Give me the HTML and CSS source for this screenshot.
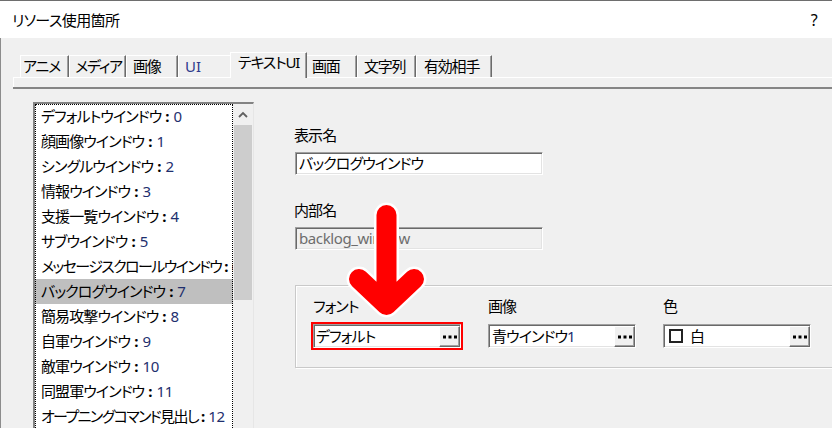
FILE: index.html
```html
<!DOCTYPE html>
<html lang="ja">
<head>
<meta charset="utf-8">
<title>リソース使用箇所</title>
<link rel="stylesheet" href="styles.css">
</head>
<body>
<div class="titlebar">
  <span class="title">リソース使用箇所</span>
  <span class="help">?</span>
</div>
<div class="dialog">
  <div class="tabs">
    <div class="tab t1">アニメ</div>
    <div class="tab t2">メディア</div>
    <div class="tab t3">画像</div>
    <div class="tab t4"><span class="latin">UI</span></div>
    <div class="tab active">テキストUI</div>
    <div class="tab t6">画面</div>
    <div class="tab t7">文字列</div>
    <div class="tab t8">有効相手</div>
  </div>
  <div class="band"></div>
  <div class="content">
    <div class="listbox">
      <div class="items">
        <div class="item">デフォルトウインドウ<span class="sep">:</span><span class="n">0</span></div>
        <div class="item">顔画像ウインドウ<span class="sep">:</span><span class="n">1</span></div>
        <div class="item">シングルウインドウ<span class="sep">:</span><span class="n">2</span></div>
        <div class="item">情報ウインドウ<span class="sep">:</span><span class="n">3</span></div>
        <div class="item">支援一覧ウインドウ<span class="sep">:</span><span class="n">4</span></div>
        <div class="item">サブウインドウ<span class="sep">:</span><span class="n">5</span></div>
        <div class="item compact">メッセージスクロールウインドウ<span class="sep">:</span><span class="n">6</span></div>
        <div class="item sel">バックログウインドウ<span class="sep">:</span><span class="n">7</span></div>
        <div class="item">簡易攻撃ウインドウ<span class="sep">:</span><span class="n">8</span></div>
        <div class="item">自軍ウインドウ<span class="sep">:</span><span class="n">9</span></div>
        <div class="item">敵軍ウインドウ<span class="sep">:</span><span class="n">10</span></div>
        <div class="item">同盟軍ウインドウ<span class="sep">:</span><span class="n">11</span></div>
        <div class="item compact">オープニングコマンド見出し<span class="sep">:</span><span class="n">12</span></div>
      </div>
      <div class="sb">
        <div class="sb-up">
          <svg width="10" height="7" viewBox="0 0 10 7"><path d="M1 6 L5 2 L9 6" fill="none" stroke="#606060" stroke-width="1.8"/></svg>
        </div>
        <div class="thumb"></div>
      </div>
    </div>
    <div class="pane">
      <div class="label">表示名</div>
      <div class="field wide"><span class="val">バックログウインドウ</span></div>
      <div class="label second">内部名</div>
      <div class="field wide disabled"><span class="val">backlog_window</span></div>
      <div class="group">
        <div class="col">
          <div class="label">フォント</div>
          <div class="field pick hl">
            <span class="val tight">デフォルト</span>
            <span class="btn"><svg width="14" height="4" viewBox="0 0 14 4"><rect x="0" y="0.5" width="3" height="3"/><rect x="5.5" y="0.5" width="3" height="3"/><rect x="11" y="0.5" width="3" height="3"/></svg></span>
          </div>
        </div>
        <div class="col">
          <div class="label">画像</div>
          <div class="field pick">
            <span class="val">青ウインドウ<span class="n">1</span></span>
            <span class="btn"><svg width="14" height="4" viewBox="0 0 14 4"><rect x="0" y="0.5" width="3" height="3"/><rect x="5.5" y="0.5" width="3" height="3"/><rect x="11" y="0.5" width="3" height="3"/></svg></span>
          </div>
        </div>
        <div class="col">
          <div class="label">色</div>
          <div class="field pick">
            <span class="swatch"></span>
            <span class="val colorname">白</span>
            <span class="btn"><svg width="14" height="4" viewBox="0 0 14 4"><rect x="0" y="0.5" width="3" height="3"/><rect x="5.5" y="0.5" width="3" height="3"/><rect x="11" y="0.5" width="3" height="3"/></svg></span>
          </div>
        </div>
      </div>
    </div>
  </div>
</div>
<svg class="arrow" width="832" height="428" viewBox="0 0 832 428">
  <path d="M386.5 215 V304 M359 279 L386.5 305 L414 279" fill="none" stroke="#ffffff" stroke-width="25" stroke-linecap="round" stroke-linejoin="round"/>
  <path d="M386.5 215 V304 M359 279 L386.5 305 L414 279" fill="none" stroke="#ff0000" stroke-width="20" stroke-linecap="round" stroke-linejoin="round"/>
</svg>
</body>
</html>
```
FILE: styles.css
```css
* { box-sizing: border-box; }

body {
  margin: 0;
  width: 832px;
  height: 428px;
  overflow: hidden;
  position: relative;
  background: #f0f0f0;
  color: #000;
  font-family: "Noto Sans", "Noto Sans CJK JP", sans-serif;
  font-size: 15px;
  letter-spacing: -0.9px;
  font-feature-settings: "palt";
}

.titlebar {
  height: 38px;
  border-top: 1px solid #6e6e6e;
  background: #ffffff;
  display: flex;
  align-items: center;
  justify-content: space-between;
  padding: 0 15px 0 12px;
  line-height: 20px;
  letter-spacing: -0.6px;
}
.help { font-size: 16px; }

.dialog {
  border-left: 1px solid #8c8c8c;
  height: 390px;
}

.tabs {
  display: flex;
  align-items: flex-end;
  height: 39px;
  padding: 14px 0 0 19px;
}
.tab {
  flex: none;
  height: 22px;
  line-height: 20px;
  white-space: nowrap;
  letter-spacing: -1.2px;
  background: #f0f0f0;
  border-top: 1px solid #ffffff;
  border-left: 1px solid #ffffff;
  border-right: 1px solid #6b6b6b;
  box-shadow: inset -1px 0 0 #a0a0a0;
}
.t1 { width: 49px; padding-left: 2px; }
.t2 { width: 57px; padding-left: 5px; }
.t3 { width: 52px; padding-left: 6px; }
.t4 { width: 54px; padding-left: 6px; }
.t6 { width: 52px; padding-left: 6px; }
.t7 { width: 59px; padding-left: 6px; }
.t8 { width: 76px; padding-left: 7px; }
.tab.active {
  width: 77px;
  height: 26px;
  line-height: 18px;
  padding-left: 7px;
  margin: 0 -2px -1px -2px;
  position: relative;
  z-index: 1;
}
.latin { color: #2e3a8c; letter-spacing: 0; }

.band {
  height: 10px;
  margin-left: 12px;
  border-top: 1px solid #ffffff;
  border-left: 1px solid #ffffff;
}

.content {
  margin-left: 12px;
  border-top: 2px solid #858585;
  display: flex;
  align-items: flex-start;
}

.listbox {
  flex: none;
  display: flex;
  width: 221px;
  height: 330px;
  margin: 13px 0 0 20px;
  border-top: 2px solid #838383;
  border-left: 2px solid #838383;
  border-right: 1px solid #e6e6e6;
}
.items {
  width: 198px;
  background: #ffffff;
  outline: 1px dotted #000;
  outline-offset: -1px;
  overflow: hidden;
}
.item {
  height: 25px;
  line-height: 25px;
  padding-left: 6px;
  white-space: nowrap;
}
.item.compact { letter-spacing: -1.6px; }
.item.compact .sep { margin: 0 3px; }
.item.sel { background: #bfbfbf; }
.sep {
  display: inline-block;
  letter-spacing: 0;
  margin: 0 4px 0 4px;
  font-weight: 700;
}
.n { color: #1e2f6e; letter-spacing: -0.3px; }

.sb {
  width: 20px;
  background: #f0f0f0;
}
.sb-up {
  height: 21px;
  display: flex;
  align-items: center;
  justify-content: center;
}
.thumb {
  height: 175px;
  margin: 0 1px;
  background: #cdcdcd;
}

.pane {
  flex: none;
  width: 560px;
  margin-left: 40px;
  padding-top: 36px;
}
.label {
  height: 20px;
  line-height: 20px;
  white-space: nowrap;
}
.label.second { margin-top: 25px; }

.field {
  display: flex;
  align-items: center;
  height: 23px;
  background: #ffffff;
  border: 1px solid;
  border-color: #a0a0a0 #ffffff #ffffff #a0a0a0;
  box-shadow: inset 1px 1px 0 #696969, inset -1px -1px 0 #e3e3e3;
  white-space: nowrap;
  overflow: hidden;
}
.wide {
  width: 248px;
  margin: 7px 0 0 1px;
}
.val {
  padding-left: 3px;
  line-height: 19px;
}
.disabled {
  background: #f0f0f0;
  color: #6d6d6d;
}
.disabled .val { letter-spacing: -0.4px; }

.group {
  display: flex;
  gap: 27px;
  width: 560px;
  margin: 35px 0 0 1px;
  padding: 10px 0 19px 17px;
  border: 1px solid #c9c9c9;
  box-shadow: inset 1px 1px 0 #ffffff, 1px 1px 0 #ffffff;
}
.col {
  flex: none;
  width: 148px;
}
.col .field {
  height: 24px;
  margin-top: 8px;
  align-items: stretch;
}
.pick .val {
  flex: 1;
  display: flex;
  align-items: center;
}
.val.tight { padding-left: 2px; }
.hl { outline: 2px solid #ff0000; }

.btn {
  flex: none;
  width: 21px;
  margin-top: 1px;
  background: #f0f0f0;
  border-top: 1px solid #ffffff;
  border-left: 1px solid #ffffff;
  border-right: 1px solid #696969;
  border-bottom: 1px solid #696969;
  box-shadow: inset -1px -1px 0 #a0a0a0;
  display: flex;
  align-items: center;
  justify-content: center;
}
.btn svg { fill: #000; }

.swatch {
  flex: none;
  align-self: center;
  width: 14px;
  height: 14px;
  margin-left: 5px;
  border: 2px solid #222;
  background: #ffffff;
}
.val.colorname { padding-left: 7px; }

.arrow {
  position: absolute;
  left: 0;
  top: 0;
  pointer-events: none;
}
```
